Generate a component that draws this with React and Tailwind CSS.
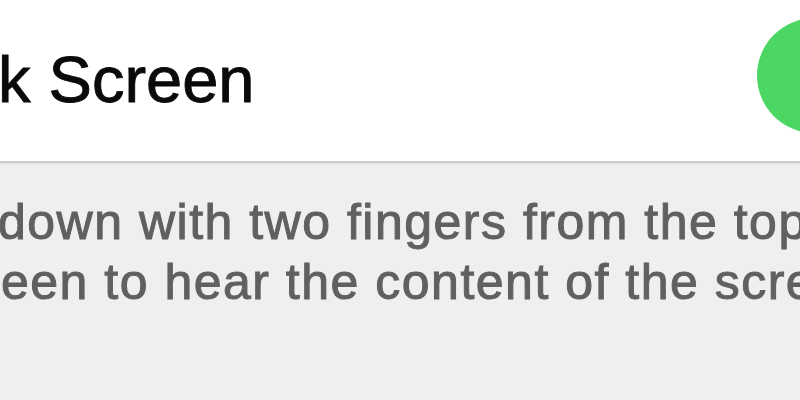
import React from 'react';

const App = () => {
  return (
    <div
      className="w-[800px] h-[400px] overflow-hidden bg-[#efefef] flex flex-col"
      style={{ fontFamily: '"Liberation Sans", Arial, sans-serif' }}
    >
      {/* setting row */}
      <div className="h-[161px] shrink-0 bg-white flex items-start overflow-hidden">
        <div className="flex-1 min-w-0 pt-[47px] ml-[-2px] whitespace-nowrap text-[65px] leading-[65px] text-[#0a0a0a] [-webkit-text-stroke:0.9px_#0a0a0a]">
          k Screen
        </div>
        <div className="shrink-0 mt-[18px] mr-[-80px] w-[123px] h-[115px] rounded-full bg-[#4cd664]" />
      </div>
      <div className="h-[2px] shrink-0 bg-[#c9c9c9]" />
      <div className="h-[2px] shrink-0 bg-[#e6e6e6]" />

      {/* footer note */}
      <div className="flex-1 pt-[27px] overflow-hidden text-[50px] leading-[60px] tracking-[1.5px] text-[#606062] [-webkit-text-stroke:1px_#606062] whitespace-nowrap">
        <div className="ml-[-2px]">down with two fingers from the top</div>
        <div className="ml-[1px]">een to hear the content of the scre</div>
      </div>
    </div>
  );
};

export default App;
